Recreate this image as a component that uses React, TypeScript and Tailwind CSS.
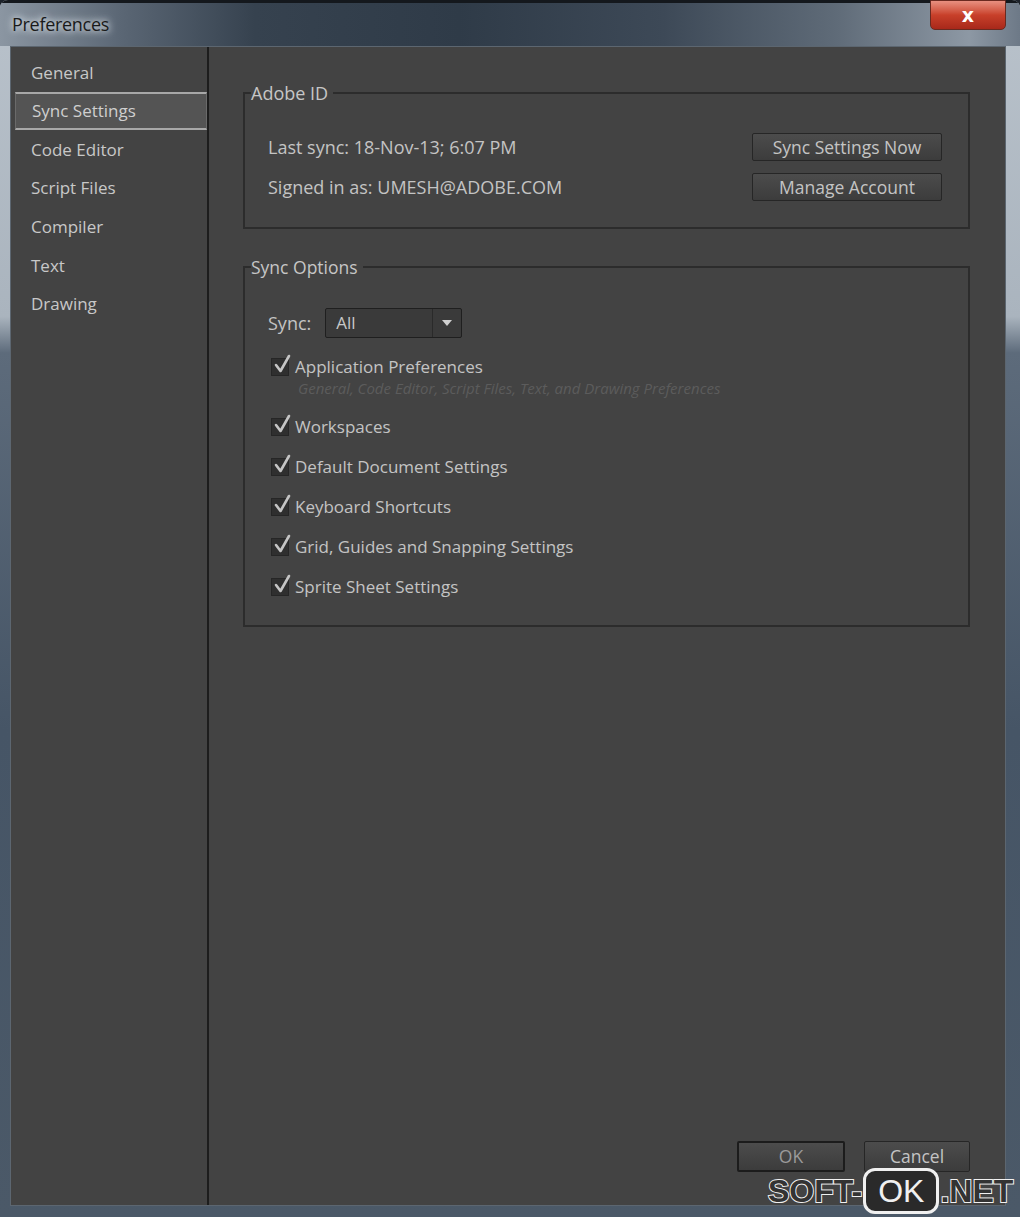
import React from 'react';

const navItems = ['General', 'Sync Settings', 'Code Editor', 'Script Files', 'Compiler', 'Text', 'Drawing'];

const syncOptions = [
  { label: 'Application Preferences', note: 'General, Code Editor, Script Files, Text, and Drawing Preferences' },
  { label: 'Workspaces' },
  { label: 'Default Document Settings' },
  { label: 'Keyboard Shortcuts' },
  { label: 'Grid, Guides and Snapping Settings' },
  { label: 'Sprite Sheet Settings' },
];

const CheckBox = () => (
  <div className="relative w-[18px] h-[18px] shrink-0 bg-[#2f2f2f] border border-[#262626]">
    <svg className="absolute -top-[6px] left-[1px]" width="20" height="22" viewBox="0 0 20 22">
      <path d="M3 12 L7.5 18 L16 3" fill="none" stroke="#c4c4c4" strokeWidth="2.6" strokeLinecap="round" strokeLinejoin="round" />
    </svg>
  </div>
);

const DlgButton = ({ children, primary }: { children: React.ReactNode; primary?: boolean }) => (
  <button
    className={`flex-1 flex items-center justify-center rounded-[2px] bg-gradient-to-b from-[#4c4c4c] to-[#3c3c3c] text-[17.5px] ${
      primary ? 'border-2 border-[#1c1c1c] text-[#9a9a9a]' : 'border border-[#262626] text-[#c4c4c4]'
    }`}
  >
    {children}
  </button>
);

export default function App() {
  return (
    <div className="w-[1020px] h-[1217px] bg-[#1c222a] overflow-hidden relative" style={{ fontFamily: '"Open Sans", "Noto Sans", sans-serif' }}>
      <div className="w-full h-full flex flex-col rounded-t-[8px] overflow-hidden bg-[linear-gradient(180deg,#b9c2cb_0%,#aab4be_26%,#5d6b7b_29%,#465566_60%,#4b5968_100%)]">
        {/* title bar */}
        <div className="h-[46px] shrink-0 flex items-start justify-between bg-[linear-gradient(90deg,#8b96a2_0%,#5a6674_12%,#36424f_25%,#2f3b48_45%,#3d4957_65%,#5f6b78_82%,#8d98a4_95%,#6d7987_100%)] border-t-[3px] border-[#14181d]">
          <div className="pl-[12px] pt-[8px] text-[18px] text-[#1a1a1a] tracking-[-0.3px]" style={{ textShadow: '0 0 10px #dfe6ec, 0 0 6px #dfe6ec' }}>
            Preferences
          </div>
          <div className="mr-[14px] -mt-[3px] w-[76px] h-[30px] rounded-b-[5px] border border-[#6a2a20] bg-gradient-to-b from-[#e89080] via-[#c8402a] to-[#a8281a] flex items-center justify-center">
            <span className="text-white text-[19px] font-bold leading-none" style={{ fontFamily: '"DejaVu Sans", sans-serif' }}>x</span>
          </div>
        </div>

        {/* body */}
        <div className="flex-1 flex pl-[10px] pr-[14px] pb-[11px]">
          <div className="flex-1 flex bg-[#434343] border border-[#5c6670]">
            {/* sidebar */}
            <div className="w-[198px] shrink-0 border-r-[2px] border-[#1d1d1d] pt-[6px] pl-[4px]">
              {navItems.map((item) => (
                <div
                  key={item}
                  className={`h-[38.6px] flex items-center pl-[16px] text-[17px] ${
                    item === 'Sync Settings'
                      ? 'bg-[#545454] border-y-[2px] border-[#a8a8a8] border-l border-l-[#6a6a6a] border-r border-r-[#6a6a6a] text-[#cfcfcf]'
                      : 'text-[#c8c8c8]'
                  }`}
                >
                  {item}
                </div>
              ))}
            </div>

            {/* content */}
            <div className="flex-1 flex flex-col pl-[34px] pr-[35px]">
              <fieldset className="mt-[36px] border-2 border-[#2c2c2c] pl-[23px] pr-[26px] pt-[30px] pb-[26px]">
                <legend className="-ml-[17px] pr-[5px] text-[18px] text-[#c6c6c6] leading-[20px]">Adobe ID</legend>
                <div className="flex justify-between">
                  <div className="flex flex-col gap-[12px] text-[18px] text-[#c4c4c4]">
                    <div className="h-[28px] flex items-center">Last sync: 18-Nov-13; 6:07 PM</div>
                    <div className="h-[28px] flex items-center">Signed in as: UMESH@ADOBE.COM</div>
                  </div>
                  <div className="flex flex-col gap-[12px] w-[190px]">
                    <div className="h-[28px] flex"><DlgButton>Sync Settings Now</DlgButton></div>
                    <div className="h-[28px] flex"><DlgButton>Manage Account</DlgButton></div>
                  </div>
                </div>
              </fieldset>

              <fieldset className="mt-[28px] border-2 border-[#2c2c2c] pl-[23px] pr-[26px] pt-[31px] pb-[27px]">
                <legend className="-ml-[17px] pr-[5px] text-[17.5px] text-[#c6c6c6] leading-[20px]">Sync Options</legend>
                <div className="flex items-center gap-[14px]">
                  <span className="text-[18px] text-[#c4c4c4]">Sync:</span>
                  <div className="w-[137px] h-[30px] flex bg-[#3a3a3a] border border-[#1f1f1f] rounded-[2px]">
                    <div className="flex-1 flex items-center pl-[10px] text-[17px] text-[#c8c8c8]">All</div>
                    <div className="w-[29px] border-l border-[#2a2a2a] flex items-center justify-center">
                      <svg width="12" height="8" viewBox="0 0 12 8"><path d="M1 1 L11 1 L6 7 Z" fill="#d0d0d0" /></svg>
                    </div>
                  </div>
                </div>
                <div className="mt-[18px] flex flex-col gap-[18px] pl-[3px]">
                  {syncOptions.map((opt) => (
                    <div key={opt.label}>
                      <div className="flex items-center gap-[6px] h-[22px]">
                        <CheckBox />
                        <span className="text-[17px] text-[#c4c4c4]">{opt.label}</span>
                      </div>
                      {opt.note && (
                        <div className="pl-[27px] text-[15px] italic text-[#5c5c5c] leading-[20px]">{opt.note}</div>
                      )}
                    </div>
                  ))}
                </div>
              </fieldset>

              <div className="mt-auto mb-[33px] flex justify-end gap-[19px]">
                <div className="w-[108px] h-[31px] flex"><DlgButton primary>OK</DlgButton></div>
                <div className="w-[106px] h-[31px] flex"><DlgButton>Cancel</DlgButton></div>
              </div>
            </div>
          </div>
        </div>
      </div>

      {/* watermark */}
      <div className="absolute left-[768px] top-[1168px] flex items-center text-[32px] leading-none text-[#222]" style={{ fontFamily: '"Liberation Sans", sans-serif' }}>
        <span className="font-bold text-[#333]" style={{ WebkitTextStroke: '2px #f0f0f0', paintOrder: 'stroke fill' }}>SOFT-</span>
        <span className="mx-[1px] px-[12px] h-[46px] flex items-center rounded-[12px] border-[3px] border-[#f0f0f0] bg-[#2a2a2a] text-[#f0f0f0]">OK</span>
        <span className="font-bold text-[#333]" style={{ WebkitTextStroke: '2px #f0f0f0', paintOrder: 'stroke fill' }}>.NET</span>
      </div>
    </div>
  );
}
